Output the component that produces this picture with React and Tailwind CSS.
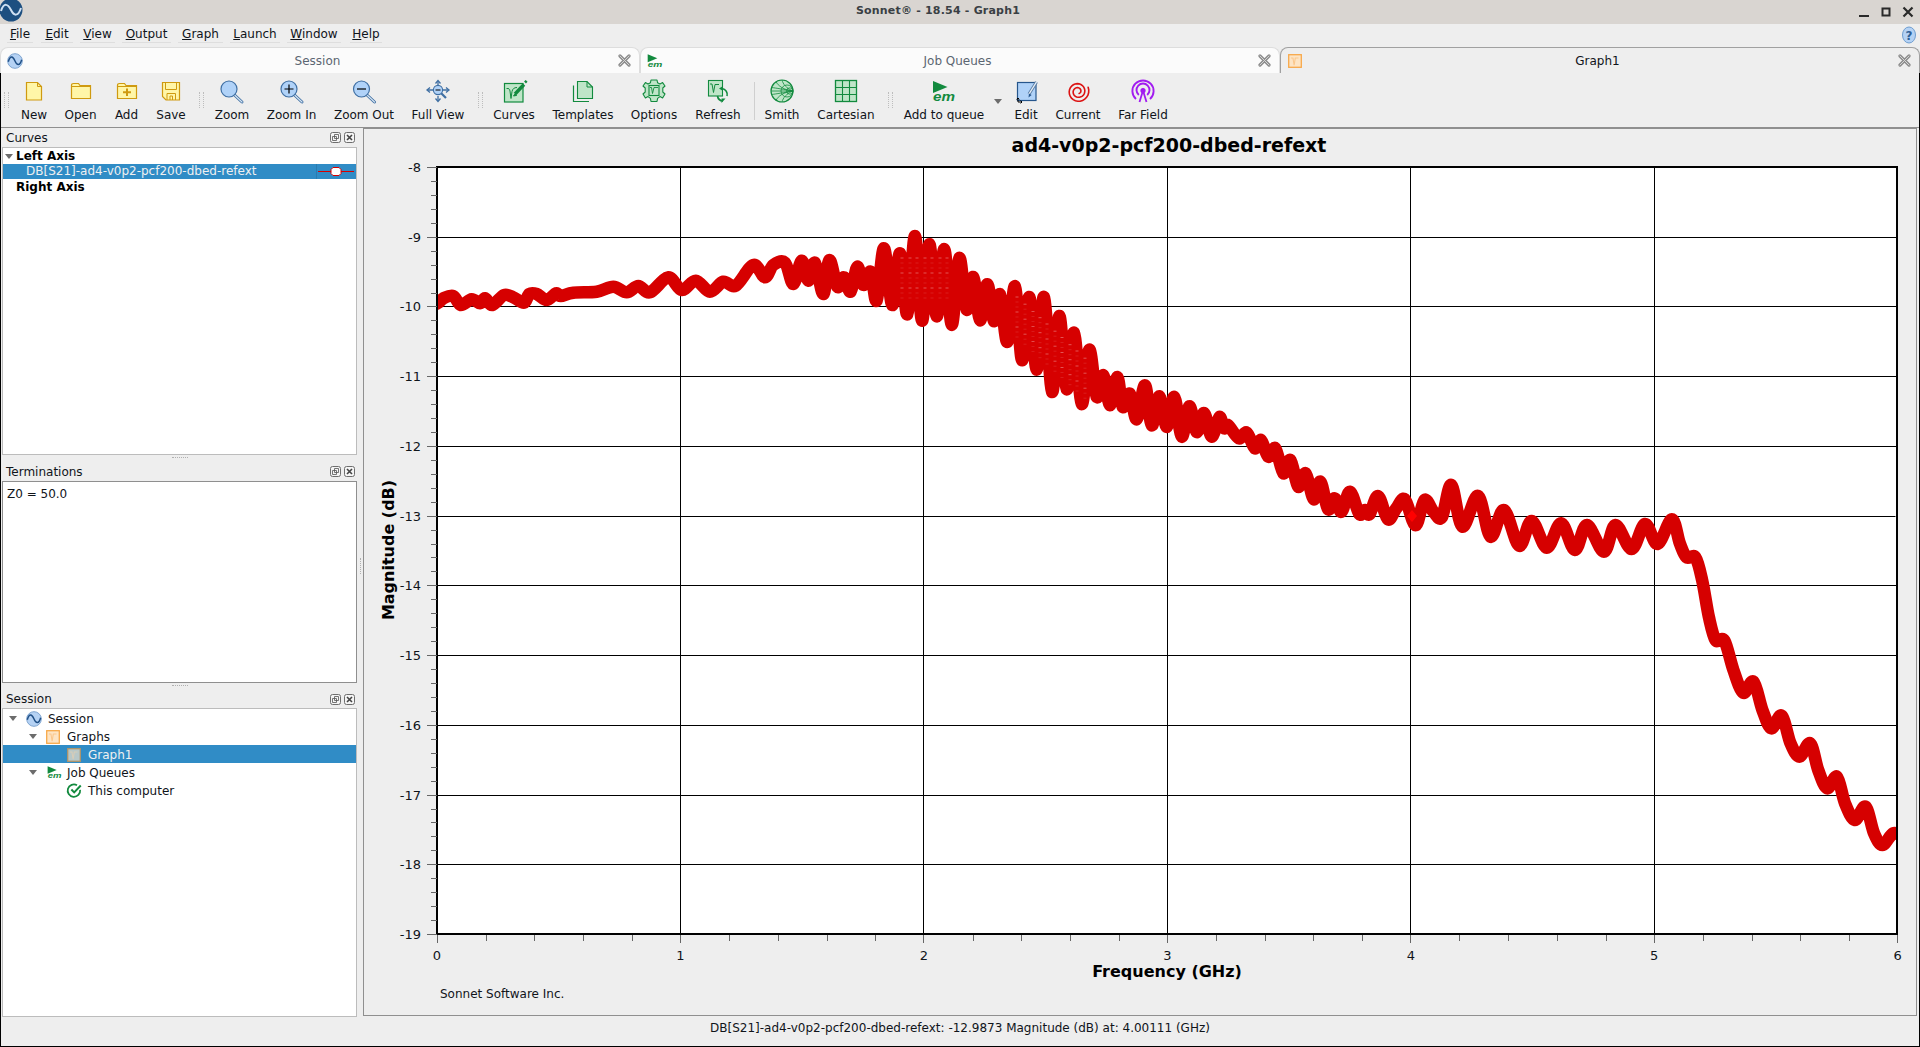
const UI_FONT = 'font-["DejaVu_Sans",sans-serif]';

const MENUS = [
  { label: 'File', width: 'w-[26px]', margin: 'ml-[7px]' },
  { label: 'Edit', width: 'w-[32px]', margin: 'ml-[8px]' },
  { label: 'View', width: 'w-[35px]', margin: 'ml-[7px]' },
  { label: 'Output', width: 'w-[49px]', margin: 'ml-[7px]' },
  { label: 'Graph', width: 'w-[45px]', margin: 'ml-[7px]' },
  { label: 'Launch', width: 'w-[50px]', margin: 'ml-[7px]' },
  { label: 'Window', width: 'w-[54px]', margin: 'ml-[7px]' },
  { label: 'Help', width: 'w-[32px]', margin: 'ml-[9px]' },
];

const GREEN = '#128a3e';
const GREEN_FILL = '#bfe5c8';
const YELLOW = '#cf9a10';
const YELLOW_FILL = '#fff6a8';
const BLUE = '#3f6fa3';
const BLUE_FILL = '#b0d2f8';

// ---- icons ----
function Svg({ children, size = 24 }) {
  return (
    <svg width={size} height={size} viewBox="0 0 24 24" fill="none" className="overflow-visible shrink-0">
      {children}
    </svg>
  );
}

const NewIcon = () => (
  <Svg>
    <path d="M4.5 3.5H15.5L19.5 7.5V21H4.5Z" fill={YELLOW_FILL} stroke={YELLOW} strokeWidth="1.2" />
    <path d="M15.5 3.5V7.5H19.5" stroke={YELLOW} strokeWidth="1" />
  </Svg>
);
const OpenIcon = () => (
  <Svg>
    <path d="M2.5 6.5Q2.5 4.5 4.5 4.5H9.5L11 6.5H21.5V19.5H2.5Z" fill={YELLOW_FILL} stroke={YELLOW} strokeWidth="1.2" />
    <path d="M2.5 7.5H21.5" stroke={YELLOW} strokeWidth="1" />
  </Svg>
);
const AddIcon = () => (
  <Svg>
    <path d="M2.5 6.5Q2.5 4.5 4.5 4.5H9.5L11 6.5H21.5V19.5H2.5Z" fill={YELLOW_FILL} stroke={YELLOW} strokeWidth="1.2" />
    <path d="M2.5 7.5H21.5" stroke={YELLOW} strokeWidth="1" />
    <path d="M12 9.5V17M8 13.2H16" stroke={YELLOW} strokeWidth="2" />
  </Svg>
);
const SaveIcon = () => (
  <Svg>
    <path d="M3.5 3.5H20.5V21H7L3.5 17.5Z" fill={YELLOW_FILL} stroke={YELLOW} strokeWidth="1.2" />
    <path d="M6.5 3.5V10.5H17.5V3.5M8 21V14.5H16.5V21M11 21V17H13.5V21" stroke={YELLOW} strokeWidth="1" />
  </Svg>
);
function Lens({ cx = 9, plus, minus }) {
  return (
    <Svg>
      <path d={`M${cx + 5.5} 16L${cx + 13} 23`} stroke={BLUE} strokeWidth="3" strokeLinecap="round" />
      <path d={`M${cx + 5.5} 16L${cx + 13} 23`} stroke="#d5e4f2" strokeWidth="1.2" strokeLinecap="round" />
      <circle cx={cx} cy="10" r="8" fill={BLUE_FILL} stroke={BLUE} strokeWidth="1.2" />
      {plus && <path d={`M${cx} 5.5V14.5M${cx - 4.5} 10H${cx + 4.5}`} stroke="#000" strokeWidth="1.2" />}
      {minus && <path d={`M${cx - 4.5} 10H${cx + 4.5}`} stroke="#000" strokeWidth="1.2" />}
    </Svg>
  );
}
const FullViewIcon = () => (
  <Svg>
    <path d="M12 2V7M12 17V22M1.5 11H7M17 11H22.5" stroke={BLUE} strokeWidth="1.3" />
    <path d="M9.5 4.5L12 1.5L14.5 4.5M9.5 19.5L12 22.5L14.5 19.5M4 8.5L1 11L4 13.5M20 8.5L23 11L20 13.5" stroke={BLUE} strokeWidth="1.3" />
    <path d="M15 14L20 19" stroke={BLUE} strokeWidth="2.2" />
    <circle cx="12" cy="11" r="4.6" fill={BLUE_FILL} stroke={BLUE} strokeWidth="1.1" />
    <path d="M9.5 11H14.5" stroke="#000" strokeWidth="1" />
  </Svg>
);
const CurvesIcon = () => (
  <Svg>
    <rect x="2.5" y="4.5" width="18.5" height="18.5" fill={GREEN_FILL} stroke={GREEN} strokeWidth="1.2" />
    <path d="M4.5 9.5C7 9.5 7.5 9.5 8 12L9 19.5L10 12.5C10.5 10 12 8.5 15 8.5" stroke={GREEN} strokeWidth="1" />
    <path d="M13 15L22 5.5" stroke={GREEN} strokeWidth="3.4" />
    <path d="M23 3.5L24.6 1.8" stroke={GREEN} strokeWidth="2.6" />
    <path d="M11.5 17L13 15L14.6 16.4Z" fill={GREEN} stroke={GREEN} />
  </Svg>
);
const TemplatesIcon = () => (
  <Svg>
    <path d="M6.5 2.5H16L21.5 8V19.5H6.5Z" fill={GREEN_FILL} stroke={GREEN} strokeWidth="1.1" />
    <path d="M16 2.5V8H21.5" stroke={GREEN} strokeWidth="1" />
    <path d="M2.5 6.5V22.5H18" stroke={GREEN} strokeWidth="1.2" />
  </Svg>
);
const OptionsIcon = () => (
  <Svg>
    <path
      d="M9 1H15L15.6 3.8L18 4.9L20.6 3.6L23 7L20.8 9L20.8 13L23 15L20.6 19L18 17.6L15.6 19.4L15 22.5H9L8.4 19.4L6 17.6L3.4 19L1 15L3.2 13L3.2 9L1 7L3.4 3.6L6 4.9L8.4 3.8Z"
      fill={GREEN_FILL}
      stroke={GREEN}
      strokeWidth="1.1"
      strokeLinejoin="round"
    />
    <rect x="7" y="6.5" width="10" height="10" fill={GREEN_FILL} stroke={GREEN} strokeWidth="1.1" />
    <path d="M8 8.5H9.5L10.5 14.5L12 8.5H16" stroke={GREEN} strokeWidth="0.9" />
  </Svg>
);
const RefreshIcon = () => (
  <Svg>
    <rect x="2.5" y="1.5" width="14" height="15.5" fill={GREEN_FILL} stroke={GREEN} strokeWidth="1.1" />
    <path d="M4 5H6L7.5 13.5L9 5.5H13" stroke={GREEN} strokeWidth="1" />
    <path d="M21 17A6 6 0 0 0 16 9.5M11.5 17A6 6 0 0 0 17 22" stroke={GREEN} strokeWidth="1.7" />
    <path d="M13 9.5L17 7V12ZM19.5 19.5L15.5 24V19.5Z" fill={GREEN} />
  </Svg>
);
const SmithIcon = () => (
  <Svg>
    <circle cx="12" cy="12" r="11" fill={GREEN_FILL} stroke={GREEN} strokeWidth="1.2" />
    <path d="M1 12H23M23 12A6 6 0 0 0 11 12A6 6 0 0 0 23 12M23 12A3.2 3.2 0 0 0 16.6 12A3.2 3.2 0 0 0 23 12" stroke={GREEN} strokeWidth="0.8" />
    <path d="M23 12C14 11 8 7 6 2.5M23 12C14 13 8 17 6 21.5M23 12C16 9 13 5 12 1M23 12C16 15 13 19 12 23M23 12C14 10.5 6 9 1.5 8.5M23 12C14 13.5 6 15 1.5 15.5" stroke={GREEN} strokeWidth="0.8" />
  </Svg>
);
const CartesianIcon = () => (
  <Svg>
    <rect x="1.5" y="1.5" width="21" height="21" fill={GREEN_FILL} stroke={GREEN} strokeWidth="1.3" />
    <path d="M8.5 1.5V22.5M15.5 1.5V22.5M1.5 8.5H22.5M1.5 15.5H22.5" stroke={GREEN} strokeWidth="1.1" />
  </Svg>
);
function EmIcon({ size = 24 }) {
  return (
    <Svg size={size}>
      <path d="M1 2V14L15.5 8Z" fill={GREEN} />
      <text x="1" y="21.5" fontSize="12" fontStyle="italic" fontWeight="700" fill={GREEN} fontFamily="Liberation Sans, sans-serif" textLength="22" lengthAdjust="spacingAndGlyphs">em</text>
    </Svg>
  );
}
const EditIcon = () => (
  <Svg>
    <rect x="3.5" y="3.5" width="18.5" height="18" fill={BLUE_FILL} stroke="#26568c" strokeWidth="1.2" />
    <path d="M15 15L22.5 3" stroke="#5a7ea6" strokeWidth="3.2" />
    <path d="M15 15L22.5 3" stroke="#e8f0f8" strokeWidth="1.4" />
    <path d="M14.5 18.5L15 14.5L17.6 16Z" fill="#26568c" />
    <path d="M4 19V23H8M2.6 20.4L4 19L5.4 20.4M6.6 21.6L8 23L6.6 24.4" stroke="#000" strokeWidth="1" />
  </Svg>
);
function SpiralIcon() {
  const pts = [];
  for (let t = 0; t <= 14; t += 0.25) {
    const r = 2.2 + t * 0.63;
    pts.push(`${(12 + r * Math.cos(13.6 - t)).toFixed(2)},${(12.5 + r * Math.sin(13.6 - t)).toFixed(2)}`);
  }
  return (
    <Svg>
      <polyline points={pts.join(' ')} stroke="#dc1212" strokeWidth="1.6" strokeLinecap="round" />
    </Svg>
  );
}
const FarFieldIcon = () => (
  <Svg>
    <path d="M5 20A10.6 10.6 0 1 1 19 20" stroke="#a21cf0" strokeWidth="1.9" />
    <path d="M7.8 16A6.5 6.5 0 1 1 16.2 16" stroke="#a21cf0" strokeWidth="1.9" />
    <circle cx="12" cy="11.5" r="2.6" fill="#a21cf0" />
    <path d="M8.5 23L12 11.5L15.5 23" stroke="#a21cf0" strokeWidth="1.8" />
  </Svg>
);

function SessionIcon({ size = 16 }) {
  return (
    <Svg size={size}>
      <circle cx="12" cy="12" r="11" fill="#b5d2f4" stroke="#7aa0cc" strokeWidth="1.4" />
      <path d="M2 13C5 3 9 5 12 12C15 19 19 20 22 10" stroke="#1f4f86" strokeWidth="2.2" />
    </Svg>
  );
}
function GraphDoc({ selected, size = 14 }) {
  const fill = selected ? '#b9c8c8' : '#fde4c4';
  const line = selected ? '#b09468' : '#f7a848';
  return (
    <Svg size={size}>
      <rect x="1.2" y="1.2" width="21.6" height="21.6" fill={fill} stroke={line} strokeWidth="2.2" />
      <path d="M5 7H8.5L10.5 19L12.5 7H18" stroke={selected ? '#d8cdb8' : '#fbc78c'} strokeWidth="1.8" />
    </Svg>
  );
}
const CheckIcon = () => (
  <Svg size={15}>
    <path d="M21 11A10 10 0 1 1 16 3.5" stroke={GREEN} strokeWidth="2.8" />
    <path d="M7 10.5L11.5 15L22 4" stroke={GREEN} strokeWidth="3.2" />
  </Svg>
);
const CloseTab = () => (
  <svg width="13" height="13" viewBox="0 0 13 13" className="shrink-0">
    <path d="M2 2L11 11M11 2L2 11" stroke="#8d8d8d" strokeWidth="3.2" strokeLinecap="round" />
    <path d="M2 2L11 11M11 2L2 11" stroke="#d4d4d4" strokeWidth="1" strokeLinecap="round" />
  </svg>
);

// ---- chrome ----
function Tab({ icon, title, active }) {
  const tone = active
    ? 'bg-[#eeeeee] border-[#a0a0a0] text-[#10141a]'
    : 'bg-[#fbfbfb] border-[#dddddd] text-[#5b6672]';
  return (
    <div className={`w-[640px] h-[26px] flex items-center pl-[6px] pr-[8px] rounded-t-[8px] border-t border-x ${tone}`}>
      <span className="w-[16px] flex justify-center">{icon}</span>
      <span className="flex-1 text-center text-[12px] pr-[6px]">{title}</span>
      <CloseTab />
    </div>
  );
}

function ToolBtn({ width, icon, label }) {
  return (
    <div className={`${width} flex flex-col items-center pt-[6px] shrink-0`}>
      <div className="h-[24px] w-[24px] flex justify-center">{icon}</div>
      <span className="mt-[5px] text-[12px] leading-[14px] text-[#10141a] whitespace-nowrap">{label}</span>
    </div>
  );
}

const Grip = ({ width }) => (
  <div className={`${width} shrink-0 flex justify-center pt-[19px]`}>
    <div className="w-[5px] h-[16px] border-x border-dotted border-[#bdbdbd]" />
  </div>
);

function DockButtons() {
  return (
    <div className="flex gap-[3px] mr-[2px]">
      <svg width="11" height="11" viewBox="0 0 11 11">
        <rect x="0.5" y="0.5" width="10" height="10" rx="2" fill="#f4f4f4" stroke="#6e6e6e" />
        <path d="M4.5 2.5H8.5V6.5H4.5Z M2.5 4.5H6.5V8.5H2.5Z" fill="none" stroke="#555" strokeWidth="0.8" />
      </svg>
      <svg width="11" height="11" viewBox="0 0 11 11">
        <rect x="0.5" y="0.5" width="10" height="10" rx="2" fill="#f4f4f4" stroke="#6e6e6e" />
        <path d="M3 3L8 8M8 3L3 8" stroke="#444" strokeWidth="1.6" />
      </svg>
    </div>
  );
}

function DockTitle({ title, height, inset = '' }) {
  return (
    <div className={`${height} ${inset} flex items-center justify-between pl-[4px] text-[12px] text-[#10141a]`}>
      <span>{title}</span>
      <DockButtons />
    </div>
  );
}

const Arrow = ({ margin }) => (
  <svg width="8" height="5" viewBox="0 0 8 5" className={`shrink-0 ${margin}`}>
    <path d="M0 0H8L4 5Z" fill="#6c6c6c" />
  </svg>
);

// ---- curve, traced from the plot in screen pixels ----
const mapPts = (pts, ox, oy, sx, sy) => pts.map(([x, y]) => [ox + x / sx, oy + y / sy]);

const LOW_BAND = [
  [-30, 262], [22, 250], [40, 235], [70, 228], [92, 255], [125, 238], [150, 250], [165, 235], [187, 255], [222, 225],
  [250, 232], [282, 248], [298, 222], [320, 222], [350, 240], [378, 220], [392, 228], [430, 218], [500, 215], [550, 200],
  [590, 217], [625, 198], [660, 217], [715, 172], [755, 210], [797, 182], [840, 215], [880, 185], [917, 197], [970, 135],
  [1005, 172], [1030, 135], [1065, 128], [1090, 192], [1115, 122], [1135, 182], [1155, 128], [1180, 222], [1198, 120],
  [1222, 200], [1242, 172], [1262, 215], [1282, 140], [1300, 195], [1322, 155], [1340, 242], [1362, 85], [1387, 255],
  [1410, 100], [1432, 283], [1455, 48],
];
const MID_BAND = [
  [66, 302], [88, 73], [110, 289], [133, 88], [155, 314], [178, 114], [200, 269], [220, 171], [240, 301], [262, 193],
  [282, 304], [300, 223], [322, 366], [345, 199], [366, 421], [388, 231], [410, 449], [432, 231], [456, 516], [478, 288],
  [500, 508], [522, 338], [545, 552], [568, 389], [590, 531], [610, 466], [630, 556], [652, 471], [668, 561], [690, 521],
  [710, 598], [735, 496], [755, 616], [778, 529], [800, 621], [823, 531], [845, 650], [868, 559], [890, 636], [912, 579],
  [935, 650], [958, 591], [972, 625],
];
const HIGH_BAND = [
  [18, 15], [42, 55], [60, 38], [78, 85], [92, 60], [108, 110], [124, 85], [142, 160], [158, 120], [175, 200], [192, 160],
  [210, 238], [225, 185], [242, 268], [257, 235], [272, 275], [291, 215], [312, 282], [325, 270], [335, 283], [354, 228],
  [376, 298], [395, 265], [414, 238], [438, 316], [458, 240], [478, 275], [497, 292], [518, 195], [543, 320], [578, 228],
  [606, 350], [636, 270], [670, 377], [698, 303], [732, 383], [764, 310], [795, 390], [822, 315], [860, 395], [886, 315],
  [922, 387], [952, 312], [980, 372], [1012, 298], [1030, 370], [1045, 412], [1065, 412], [1080, 480], [1095, 590],
  [1110, 660], [1130, 662], [1150, 750], [1172, 818], [1195, 785], [1215, 870], [1235, 925], [1258, 887], [1278, 970],
  [1298, 1010], [1322, 970], [1340, 1050], [1360, 1105], [1382, 1070], [1400, 1150], [1422, 1200], [1446, 1160],
  [1465, 1240], [1484, 1275], [1508, 1240], [1530, 1250],
];
const CURVE = [
  ...mapPts(LOW_BAND, 430, 220, 3, 3),
  ...mapPts(MID_BAND, 900, 220, 3, 3),
  ...mapPts(HIGH_BAND, 1220, 420, 2.24, 3),
];

function smoothPath(pts) {
  let d = `M${pts[0][0].toFixed(1)} ${pts[0][1].toFixed(1)}`;
  for (let i = 0; i < pts.length - 1; i++) {
    const p0 = pts[Math.max(i - 1, 0)];
    const p1 = pts[i];
    const p2 = pts[i + 1];
    const p3 = pts[Math.min(i + 2, pts.length - 1)];
    const c1 = [p1[0] + (p2[0] - p0[0]) / 6, p1[1] + (p2[1] - p0[1]) / 6];
    const c2 = [p2[0] - (p3[0] - p1[0]) / 6, p2[1] - (p3[1] - p1[1]) / 6];
    d += `C${c1[0].toFixed(1)} ${c1[1].toFixed(1)} ${c2[0].toFixed(1)} ${c2[1].toFixed(1)} ${p2[0].toFixed(1)} ${p2[1].toFixed(1)}`;
  }
  return d;
}

// the tiny gaps left inside the dense ripple
function flecks() {
  const out = [];
  [902, 910, 917, 925, 932, 940, 947].forEach((x) => {
    for (let y = 258; y < 300; y += 5) out.push([x, y]);
  });
  [1017, 1025, 1033, 1040, 1047, 1055, 1062, 1070, 1077, 1085].forEach((x) => {
    const top = 297 + (x - 1017) * 0.9;
    for (let y = top; y < top + 44; y += 5) out.push([x, y]);
  });
  return out;
}

const PX = (g) => 437 + g * 243.45;
const PY = (i) => 167 + i * 69.73;

function Plot() {
  const xMinor = [];
  for (let i = 0; i < 30; i++) if (i % 5) xMinor.push(437 + i * 48.69);
  const yMinor = [];
  for (let i = 0; i < 55; i++) if (i % 5) yMinor.push(167 + i * 13.946);
  return (
    <svg viewBox="364 129 1552 886" width="1552" height="886" className="block" fontFamily="DejaVu Sans, sans-serif">
      <rect x="436" y="166" width="1462" height="769" fill="#8a8a8a" />
      <rect x="437" y="167" width="1460" height="767" fill="#ffffff" />
      <g stroke="#000" strokeWidth="1" shapeRendering="crispEdges">
        {[1, 2, 3, 4, 5].map((g) => (
          <path key={g} d={`M${Math.floor(PX(g)) + 0.5} 167V934`} />
        ))}
        {Array.from({ length: 10 }, (_, i) => i + 1).map((i) => (
          <path key={i} d={`M437 ${Math.round(PY(i)) + 0.5}H1897`} />
        ))}
      </g>
      <g clipPath="url(#plotClip)">
        <path d={smoothPath(CURVE)} fill="none" stroke="#d60000" strokeWidth="12.5" strokeLinejoin="round" strokeLinecap="round" />
        {flecks().map(([x, y], i) => (
          <path key={i} d={`M${x - 1.5} ${y}H${x + 1.5}`} stroke="#f7c0c0" strokeWidth="0.6" opacity={i % 3 ? 0.25 : 0.75} />
        ))}
      </g>
      <path d="M1412 510L1417 516L1412 522L1407 516Z" fill="#ff0000" />
      <path d="M1897 515L1893 519L1897 523Z" fill="#ffffff" />
      <rect x="437" y="167" width="1460" height="767" fill="none" stroke="#000" strokeWidth="2" />
      <g stroke="#666" strokeWidth="1" shapeRendering="crispEdges">
        {xMinor.map((x) => (
          <path key={x} d={`M${Math.round(x) + 0.5} 935V941`} />
        ))}
        {[0, 1, 2, 3, 4, 5, 6].map((g) => (
          <path key={g} d={`M${Math.floor(PX(g)) + 0.5} 935V943`} />
        ))}
        {yMinor.map((y) => (
          <path key={y} d={`M431 ${Math.round(y) + 0.5}H437`} />
        ))}
        {Array.from({ length: 12 }, (_, i) => i).map((i) => (
          <path key={i} d={`M427 ${Math.round(PY(i)) + 0.5}H437`} />
        ))}
      </g>
      <g fontSize="13" fill="#10141a">
        {Array.from({ length: 12 }, (_, i) => i).map((i) => (
          <text key={i} x="421" y={PY(i) + 5} textAnchor="end">{`-${8 + i}`}</text>
        ))}
        {[0, 1, 2, 3, 4, 5, 6].map((g) => (
          <text key={g} x={PX(g)} y="960" textAnchor="middle">{g}</text>
        ))}
      </g>
      <text x="1169" y="152" textAnchor="middle" fontSize="19" fontWeight="700" fill="#000">ad4-v0p2-pcf200-dbed-refext</text>
      <text x="1167" y="977" textAnchor="middle" fontSize="16" fontWeight="700" fill="#000">Frequency (GHz)</text>
      <text transform="translate(394 550) rotate(-90)" textAnchor="middle" fontSize="16" fontWeight="700" fill="#000">Magnitude (dB)</text>
      <text x="440" y="998" fontSize="12" fill="#10141a">Sonnet Software Inc.</text>
      <defs>
        <clipPath id="plotClip">
          <rect x="437" y="167" width="1460" height="767" />
        </clipPath>
      </defs>
    </svg>
  );
}

function TreeRow({ selected, children }) {
  return (
    <div className={`h-[18px] pt-[1px] flex items-center text-[12px] ${selected ? 'bg-[#308cc6] text-[#eff0f1]' : 'text-[#10141a]'}`}>
      {children}
    </div>
  );
}

export default function App() {
  return (
    <div className={`w-[1920px] h-[1047px] flex flex-col overflow-hidden bg-[#eeeeee] ${UI_FONT}`}>
      {/* Title bar */}
      <div className="h-[24px] bg-[#d9d5d1] flex items-center shrink-0">
        <svg width="24" height="24" viewBox="0 0 24 24" className="shrink-0 ml-[-1px] mt-[-4px]">
          <circle cx="12" cy="12" r="11.5" fill="#1d4f80" />
          <path d="M2 13C5 4 9 6 12 12C15 18 19 19 22 10" stroke="#cfe0f2" strokeWidth="2" fill="none" />
        </svg>
        <div className="w-[1836px] pr-[6px] pb-[1px] text-center text-[11px] font-bold tracking-[0.2px] text-[#3a3f44]">Sonnet® - 18.54 - Graph1</div>
        <div className="flex items-center gap-[10px] ml-[-1px]">
          <svg width="12" height="12" viewBox="0 0 12 12"><path d="M1 10H11" stroke="#2a2a2a" strokeWidth="2" /></svg>
          <svg width="12" height="12" viewBox="0 0 12 12"><rect x="2.5" y="2.5" width="7" height="7" fill="none" stroke="#2a2a2a" strokeWidth="2" /></svg>
          <svg width="12" height="12" viewBox="0 0 12 12"><path d="M1.5 1.5L10.5 10.5M10.5 1.5L1.5 10.5" stroke="#2a2a2a" strokeWidth="2.2" /></svg>
        </div>
      </div>

      {/* Menu bar */}
      <div className="h-[23px] flex items-start shrink-0 relative text-[12px] text-[#10141a]">
        {MENUS.map((m) => (
          <div key={m.label} className={`${m.width} ${m.margin} h-[19px] pt-[1px] text-center border-b border-[#dedede]`}>
            <span><u>{m.label[0]}</u>{m.label.slice(1)}</span>
          </div>
        ))}
        <svg width="16" height="18" viewBox="0 0 16 18" className="absolute right-[3px] top-[2px]">
          <ellipse cx="8" cy="9" rx="6.5" ry="8" fill="#b5d2f4" stroke="#6f9ed0" />
          <text x="8" y="13.5" fontSize="12" fontWeight="700" textAnchor="middle" fill="#2e5f96">?</text>
        </svg>
      </div>

      {/* Document tabs */}
      <div className="h-[26px] flex shrink-0">
        <Tab icon={<SessionIcon />} title="Session" />
        <Tab icon={<EmIcon size={16} />} title="Job Queues" />
        <Tab active icon={<GraphDoc />} title="Graph1" />
      </div>

      <div className="flex-1 flex flex-col border-x border-black min-h-0">
        {/* Toolbar */}
        <div className="h-[55px] flex shrink-0 border-b border-[#8f8f8f]">
          <Grip width="w-[10px]" />
          <ToolBtn width="w-[46px]" icon={<NewIcon />} label="New" />
          <ToolBtn width="w-[47px]" icon={<OpenIcon />} label="Open" />
          <ToolBtn width="w-[45px]" icon={<AddIcon />} label="Add" />
          <ToolBtn width="w-[44px]" icon={<SaveIcon />} label="Save" />
          <Grip width="w-[16px]" />
          <ToolBtn width="w-[46px]" icon={<Lens />} label="Zoom" />
          <ToolBtn width="w-[73px]" icon={<Lens plus />} label="Zoom In" />
          <ToolBtn width="w-[72px]" icon={<Lens cx={9.5} minus />} label="Zoom Out" />
          <ToolBtn width="w-[76px]" icon={<FullViewIcon />} label="Full View" />
          <Grip width="w-[8px]" />
          <ToolBtn width="w-[60px]" icon={<CurvesIcon />} label="Curves" />
          <ToolBtn width="w-[78px]" icon={<TemplatesIcon />} label="Templates" />
          <ToolBtn width="w-[64px]" icon={<OptionsIcon />} label="Options" />
          <ToolBtn width="w-[64px]" icon={<RefreshIcon />} label="Refresh" />
          <div className="w-[8px] shrink-0 flex justify-center pt-[9px] pb-[7px]">
            <div className="w-px h-full bg-[#cfcfcf]" />
          </div>
          <ToolBtn width="w-[48px]" icon={<SmithIcon />} label="Smith" />
          <ToolBtn width="w-[80px]" icon={<CartesianIcon />} label="Cartesian" />
          <Grip width="w-[8px]" />
          <ToolBtn width="w-[100px]" icon={<EmIcon />} label="Add to queue" />
          <div className="w-[8px] shrink-0 pt-[26px] flex justify-center">
            <svg width="8" height="5" viewBox="0 0 8 5"><path d="M0 0H8L4 5Z" fill="#6c6c6c" /></svg>
          </div>
          <ToolBtn width="w-[48px]" icon={<EditIcon />} label="Edit" />
          <ToolBtn width="w-[56px]" icon={<SpiralIcon />} label="Current" />
          <ToolBtn width="w-[74px]" icon={<FarFieldIcon />} label="Far Field" />
        </div>

        <div className="flex-1 flex min-h-0">
          {/* Docks */}
          <div className="w-[356px] pl-[1px] flex flex-col shrink-0">
            <DockTitle title="Curves" height="h-[19px]" />
            <div className="h-[308px] bg-white border border-[#bcbcbc]">
              <div className="h-[16px] flex items-center text-[12px] font-bold text-black">
                <svg width="8" height="5" viewBox="0 0 8 5" className="ml-[2px]"><path d="M0 0H8L4 5Z" fill="#6c6c6c" /></svg>
                <span className="ml-[3px]">Left Axis</span>
              </div>
              <div className="h-[15px] flex items-center bg-[#308cc6] text-[12px] text-[#eff0f1]">
                <span className="w-[314px] pl-[23px] h-full leading-[15px] border-r border-[#2a7cb0]">DB[S21]-ad4-v0p2-pcf200-dbed-refext</span>
                <svg width="36" height="11" viewBox="0 0 36 11" className="ml-[1px]">
                  <path d="M0 5.5H36" stroke="#d60000" strokeWidth="1.2" />
                  <path d="M15 1.5H21L23 3.5V7.5L21 9.5H15L13 7.5V3.5Z" fill="#ffffff" stroke="#d60000" />
                </svg>
              </div>
              <div className="h-[15px] flex items-center text-[12px] font-bold text-black pl-[13px]">Right Axis</div>
            </div>
            <div className="h-[5px] flex items-center justify-center">
              <div className="w-[16px] border-t border-dotted border-[#b0b0b0]" />
            </div>
            <DockTitle title="Terminations" height="h-[21px]" inset="pt-[2px]" />
            <div className="h-[202px] bg-white border border-[#8f8f8f] pl-[4px] pt-[4px] text-[12px] leading-[16px] text-[#10141a]">Z0 = 50.0</div>
            <div className="h-[5px] flex items-center justify-center">
              <div className="w-[16px] border-t border-dotted border-[#b0b0b0]" />
            </div>
            <DockTitle title="Session" height="h-[20px]" inset="pt-[2px]" />
            <div className="flex-1 bg-white border border-[#bcbcbc]">
              <TreeRow>
                <Arrow margin="ml-[6px]" />
                <span className="ml-[9px]"><SessionIcon /></span>
                <span className="ml-[6px]">Session</span>
              </TreeRow>
              <TreeRow>
                <Arrow margin="ml-[26px]" />
                <span className="ml-[9px]"><GraphDoc /></span>
                <span className="ml-[7px]">Graphs</span>
              </TreeRow>
              <TreeRow selected>
                <span className="ml-[64px]"><GraphDoc selected /></span>
                <span className="ml-[7px]">Graph1</span>
              </TreeRow>
              <TreeRow>
                <Arrow margin="ml-[26px]" />
                <span className="ml-[10px]"><EmIcon size={15} /></span>
                <span className="ml-[5px]">Job Queues</span>
              </TreeRow>
              <TreeRow>
                <span className="ml-[64px]"><CheckIcon /></span>
                <span className="ml-[6px]">This computer</span>
              </TreeRow>
            </div>
          </div>

          {/* Splitter */}
          <div className="w-[6px] shrink-0 flex items-center justify-center">
            <div className="h-[16px] border-l border-dotted border-[#b0b0b0] mt-[-14px]" />
          </div>

          {/* Graph */}
          <div className="w-[1554px] h-[888px] border border-[#8f8f8f] shrink-0">
            <Plot />
          </div>
        </div>

        {/* Status */}
        <div className="h-[30px] shrink-0 pb-[8px] flex items-center justify-center text-[12px] text-[#10141a] border-b border-black">
          DB[S21]-ad4-v0p2-pcf200-dbed-refext: -12.9873 Magnitude (dB) at: 4.00111 (GHz)
        </div>
      </div>
    </div>
  );
}
